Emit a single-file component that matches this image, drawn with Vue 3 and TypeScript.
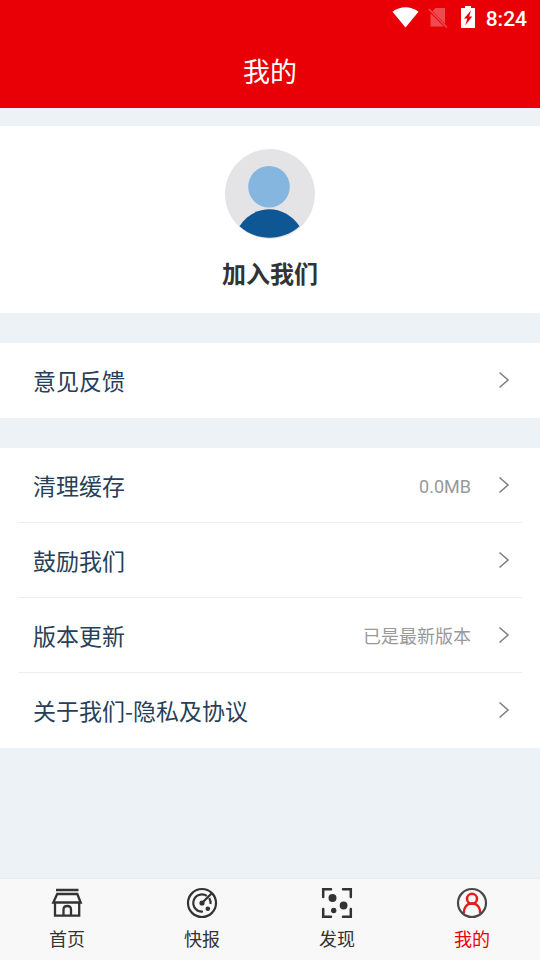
<script setup lang="ts">
import { ref } from 'vue'

interface Cell {
  title: string
  value?: string
}

interface Tab {
  key: string
  label: string
}

// 列表分组
const groups: Cell[][] = [
  [{ title: '意见反馈' }],
  [
    { title: '清理缓存', value: '0.0MB' },
    { title: '鼓励我们' },
    { title: '版本更新', value: '已是最新版本' },
    { title: '关于我们-隐私及协议' }
  ]
]

// 底部导航
const tabs: Tab[] = [
  { key: 'home', label: '首页' },
  { key: 'news', label: '快报' },
  { key: 'find', label: '发现' },
  { key: 'mine', label: '我的' }
]

const activeTab = ref('mine')
</script>

<template>
  <div class="page">
    <header class="header">
      <div class="status-bar">
        <svg class="wifi" width="28" height="22" viewBox="0 0 28 22">
          <path d="M0.500 4.800C8-1.200 19-1.200 26.500 4.800L13.500 20.600Z" fill="#fff" />
        </svg>
        <svg class="sim" width="20" height="22" viewBox="0 0 20 22">
          <path d="M7.500 1H17V16.800L4.600 4.300ZM2.500 6.200L15.800 19.500H2.500Z" fill="#f04a50" />
          <path d="M0.800 2L19 20.500" stroke="#f04a50" stroke-width="1.700" />
        </svg>
        <svg class="battery" width="14" height="22" viewBox="0 0 14 22">
          <path d="M0 2H4V0H10V2H14V22H0Z" fill="#fff" />
          <path d="M10 4.500L3 12.500H6.300L4.300 19.200L11.200 10.500H8.200Z" fill="#e80006" />
        </svg>
        <span class="clock">8:24</span>
      </div>
      <h1 class="title">我的</h1>
    </header>

    <main class="content">
      <section class="profile">
        <svg class="avatar" width="90" height="90" viewBox="0 0 90 90">
          <defs>
            <clipPath id="avatar-clip"><circle cx="45" cy="45" r="45" /></clipPath>
          </defs>
          <circle cx="45" cy="45" r="45" fill="#e4e4e6" />
          <g clip-path="url(#avatar-clip)">
            <circle cx="44" cy="37.700" r="20.800" fill="#84b6df" />
            <path d="M14.500 77.200C29 54.500 59.500 54.500 74.500 77.200C58 92.500 31 92.500 14.500 77.200Z" fill="#0f5794" />
          </g>
        </svg>
        <div class="name">加入我们</div>
      </section>

      <section v-for="(group, index) in groups" :key="index" class="group">
        <div v-for="cell in group" :key="cell.title" class="cell">
          <span class="cell-title">{{ cell.title }}</span>
          <span v-if="cell.value" class="cell-value">{{ cell.value }}</span>
          <svg class="arrow" width="12" height="18" viewBox="0 0 12 18">
            <path d="M1.500 1.500L10 9L1.500 16.500" fill="none" stroke="#808080" stroke-width="1.600" />
          </svg>
        </div>
      </section>
    </main>

    <nav class="tab-bar">
      <div
        v-for="tab in tabs"
        :key="tab.key"
        class="tab"
        :class="{ active: activeTab === tab.key }"
        @click="activeTab = tab.key"
      >
        <svg class="tab-icon" width="32" height="32" viewBox="0 0 32 32" fill="none" stroke="#333" stroke-width="2.200">
          <template v-if="tab.key === 'home'">
            <path d="M5 3H27.500M6.200 7H26.300L29.700 15.500H2.300ZM4 15V28.700H28.200V15M12.500 28.500V22.500C12.500 17.800 20 17.800 20 22.500V28.500" stroke-width="2.300" />
          </template>
          <template v-else-if="tab.key === 'news'">
            <circle cx="16" cy="16" r="14" />
            <path d="M20.800 8.900A8.600 8.600 0 1 0 17 24.500M16 16L25.500 6.500M23.200 11.200A8.600 8.600 0 0 1 24.500 17" />
            <circle cx="16" cy="16" r="2.600" fill="#333" stroke="none" />
            <circle cx="21.800" cy="21.800" r="2.300" fill="#333" stroke="none" />
          </template>
          <template v-else-if="tab.key === 'find'">
            <path d="M2.200 10V2.200H10M22 2.200H29.800V10M29.800 22V29.800H22M10 29.800H2.200V22" stroke-width="2.500" stroke-linecap="round" />
            <g fill="#333" stroke="none">
              <circle cx="11.500" cy="11" r="4" />
              <circle cx="22.600" cy="18.500" r="3.900" />
              <circle cx="12.700" cy="23.500" r="2.700" />
            </g>
          </template>
          <template v-else>
            <g stroke="#e61c1c" stroke-width="2.500">
              <circle cx="16" cy="11.800" r="5" />
              <path d="M7.800 26.500C7.800 21 10.300 16.600 16 16.600S24.200 21 24.200 26.500" />
            </g>
            <circle cx="16" cy="16" r="14" stroke="#484848" />
          </template>
        </svg>
        <span class="tab-label">{{ tab.label }}</span>
      </div>
    </nav>
  </div>
</template>

<style>
body {
  margin: 0;
}
</style>

<style scoped>
.page {
  display: flex;
  flex-direction: column;
  height: 960px;
  background: #edf2f6;
  font-family: Roboto, 'Noto Sans CJK SC', sans-serif;
}
.header {
  height: 108px;
  background: #e80006;
  color: #fff;
}
.status-bar {
  display: flex;
  align-items: center;
  justify-content: flex-end;
  height: 36px;
  padding-right: 12px;
  box-sizing: border-box;
}
.sim {
  margin-left: 8px;
}
.battery {
  margin: 0 11px 2px 13px;
}
.clock {
  margin-right: 1px;
  padding-top: 1px;
  font-size: 21px;
  font-weight: 500;
  line-height: 36px;
}
.title {
  margin: 0;
  padding-top: 1px;
  font-size: 27px;
  font-weight: 400;
  line-height: 72px;
  text-align: center;
}
.content {
  flex: 1;
  padding-top: 18px;
}
.profile {
  display: flex;
  flex-direction: column;
  align-items: center;
  height: 187px;
  padding-top: 23px;
  box-sizing: border-box;
  background: #fff;
}
.name {
  margin-top: 18px;
  font-size: 24px;
  font-weight: 700;
  line-height: 36px;
  color: #333;
}
.group {
  margin-top: 30px;
  padding: 0 18px;
  background: #fff;
}
.cell {
  display: flex;
  align-items: center;
  height: 75px;
  padding: 0 12px 0 15px;
  box-sizing: border-box;
  border-bottom: 1px solid #eee;
}
.cell:last-child {
  border-bottom-color: transparent;
}
.cell-title {
  font-family: 'Noto Sans CJK SC', sans-serif;
  font-size: 23px;
  line-height: 36px;
  color: #273f58;
}
.cell-value {
  margin: 4px 27px 0 auto;
  font-size: 18px;
  line-height: 24px;
  color: #999;
}
.arrow {
  margin-left: auto;
}
.cell-value + .arrow {
  margin-left: 0;
}
.tab-bar {
  display: flex;
  height: 82px;
  box-sizing: border-box;
  border-top: 1px solid #e9edf0;
  background: #f8f8f8;
}
.tab {
  display: flex;
  flex: 1;
  flex-direction: column;
  align-items: center;
  padding: 8px 1px 0 0;
  color: #333;
}
.tab-label {
  margin-top: 8px;
  font-size: 18px;
  line-height: 26px;
}
.tab.active {
  color: #e80006;
}
</style>
